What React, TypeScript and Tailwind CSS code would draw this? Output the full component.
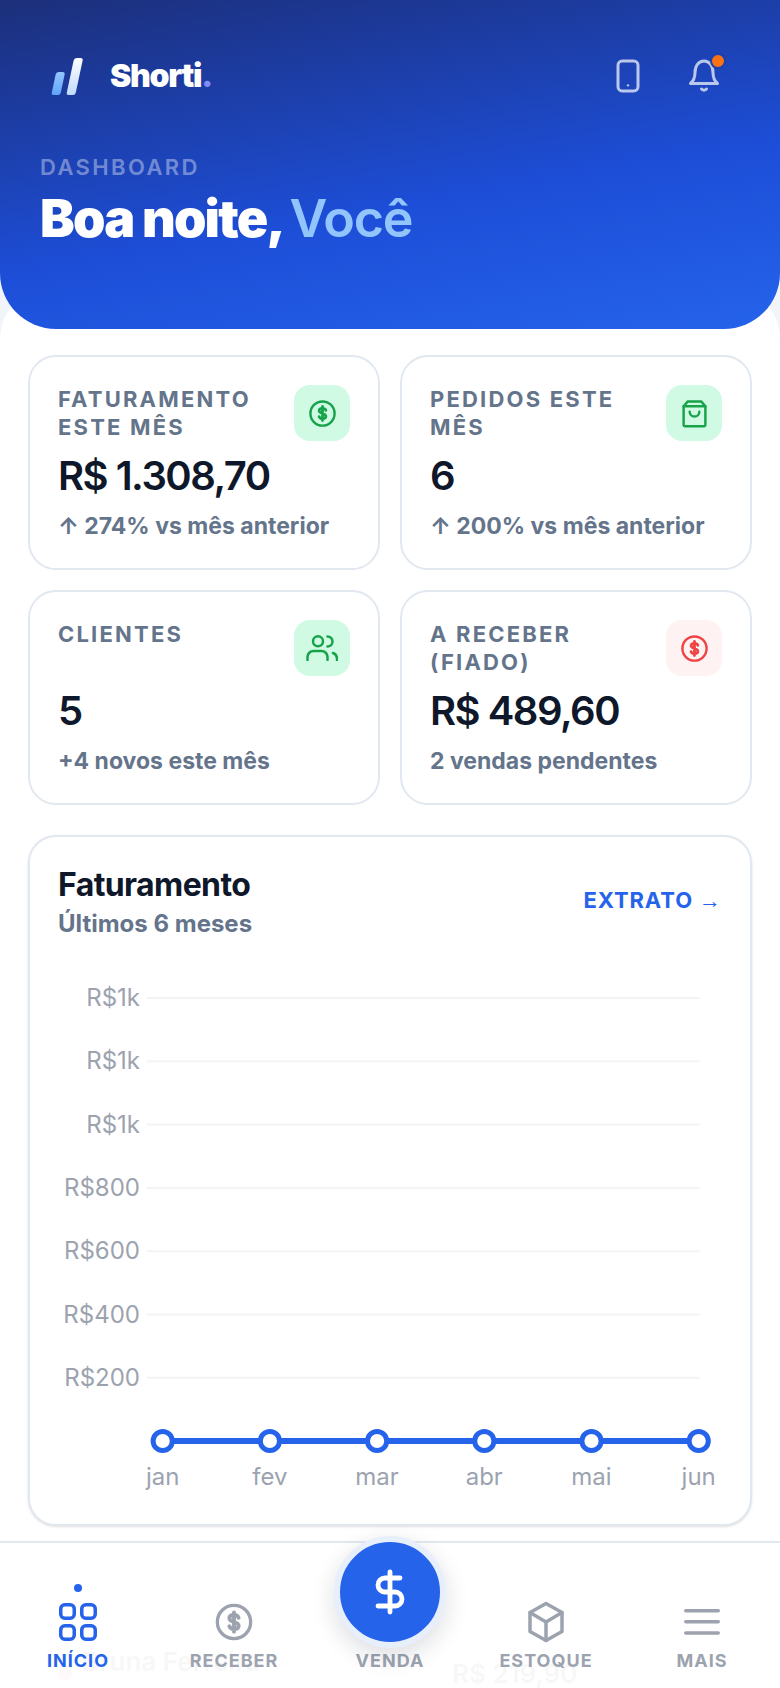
import { DollarSign } from "lucide-react";

type Stat = {
  label: string[];
  value: string;
  note: string;
  tone: "green" | "red";
  icon: "money" | "bag" | "users";
};

const stats: Stat[] = [
  { label: ["FATURAMENTO", "ESTE MÊS"], value: "R$ 1.308,70", note: "↑ 274% vs mês anterior", tone: "green", icon: "money" },
  { label: ["PEDIDOS ESTE", "MÊS"], value: "6", note: "↑ 200% vs mês anterior", tone: "green", icon: "bag" },
  { label: ["CLIENTES"], value: "5", note: "+4 novos este mês", tone: "green", icon: "users" },
  { label: ["A RECEBER", "(FIADO)"], value: "R$ 489,60", note: "2 vendas pendentes", tone: "red", icon: "money" },
];

const ticks = ["R$1k", "R$1k", "R$1k", "R$800", "R$600", "R$400", "R$200"];
const months = ["jan", "fev", "mar", "abr", "mai", "jun"];

function MoneyIcon({ size }: { size: number }) {
  return (
    <svg width={size} height={size} viewBox="0 0 24 24" fill="none" stroke="currentColor" strokeWidth="2" strokeLinecap="round" strokeLinejoin="round">
      <circle cx="12" cy="12" r="10" />
      <path d="M14.8 9.4c-.4-1-1.4-1.6-2.8-1.6-1.7 0-2.8.8-2.8 2 0 2.8 5.6 1.6 5.6 4.4 0 1.2-1.1 2-2.8 2-1.4 0-2.4-.6-2.8-1.6M12 6.2v11.6" strokeWidth="2.3" />
    </svg>
  );
}

function BagIcon() {
  return (
    <svg width="29" height="29" viewBox="0 0 24 24" fill="none" stroke="currentColor" strokeWidth="2" strokeLinecap="round" strokeLinejoin="round">
      <path d="M6.5 2h11L21 6v15.5a1 1 0 0 1-1 1H4a1 1 0 0 1-1-1V6Z" />
      <path d="M3 6h18" />
      <path d="M8 10.5a4 4 0 0 0 8 0" />
    </svg>
  );
}

function UsersIcon() {
  return (
    <svg width="32" height="26" viewBox="0 0 32 26" fill="none" stroke="currentColor" strokeWidth="2.5" strokeLinecap="round" strokeLinejoin="round">
      <circle cx="12" cy="6.3" r="5" />
      <path d="M1.5 25v-3a6 6 0 0 1 6-6h8a6 6 0 0 1 6 6v3" />
      <path d="M21.5 1.5a5 5 0 0 1 0 10" />
      <path d="M31 25v-2a6 6 0 0 0-4-5" />
    </svg>
  );
}

function StatCard({ stat }: { stat: Stat }) {
  const boxTone = stat.tone === "green" ? "bg-[#d1fae5] text-[#16a34a]" : "bg-[#fef2f2] text-[#ef4444]";
  return (
    <div className="h-[215px] rounded-[28px] border-2 border-[#e2e8f0] bg-white p-7">
      <div className="flex h-14 items-start justify-between">
        <div className="text-[22px] leading-7 font-bold tracking-[2.2px] text-[#64748b]">
          {stat.label.map((line) => (
            <div key={line}>{line}</div>
          ))}
        </div>
        <div className={`flex h-14 w-14 shrink-0 items-center justify-center rounded-2xl ${boxTone}`}>
          {stat.icon === "money" && <MoneyIcon size={29} />}
          {stat.icon === "bag" && <BagIcon />}
          {stat.icon === "users" && <UsersIcon />}
        </div>
      </div>
      <div className="mt-[11px] text-[40px] leading-[48px] font-semibold tracking-[-1.5px] text-[#0f172a]">{stat.value}</div>
      <div className="mt-[10px] text-[23px] leading-[32px] font-bold text-[#64748b]">{stat.note}</div>
    </div>
  );
}

function RevenueChart() {
  return (
    <svg width="664" height="521" viewBox="0 0 664 521" className="mt-9 block">
      {ticks.map((t, i) => {
        const y = 23 + i * 63.3;
        return (
          <g key={i}>
            <line x1="89" x2="642" y1={y} y2={y} stroke="#f3f4f6" strokeWidth="2" />
            <text x="82" y={y + 8} textAnchor="end" fontSize="24" fill="#9ca3af">{t}</text>
          </g>
        );
      })}
      <line x1="104.7" x2="640.7" y1="466" y2="466" stroke="#2563eb" strokeWidth="6" />
      {months.map((m, i) => {
        const x = 104.7 + i * 107.2;
        return (
          <g key={m}>
            <circle cx={x} cy="466" r="9.6" fill="#fff" stroke="#2563eb" strokeWidth="5" />
            <text x={x} y="510" textAnchor="middle" fontSize="24" fill="#9ca3af">{m}</text>
          </g>
        );
      })}
    </svg>
  );
}

function BottomNav() {
  const label = "mt-[5px] text-[18px] leading-6 font-bold tracking-[1px]";
  const gray = "flex flex-col items-center pt-[57px] text-[#9ca3af]";
  return (
    <nav className="absolute inset-x-0 bottom-0 h-[147px] border-t-2 border-[#e2e8f0] bg-white/[0.97]">
      <div className="grid grid-cols-5">
        <div className="flex flex-col items-center pt-[41px] text-[#2563eb]">
          <span className="h-2 w-2 rounded-full bg-[#2563eb]" />
          <svg className="mt-2" width="44" height="44" viewBox="0 0 44 44" fill="none" stroke="currentColor" strokeWidth="3.5">
            <rect x="4.75" y="4.75" width="13.5" height="13.5" rx="4" />
            <rect x="25.75" y="4.75" width="13.5" height="13.5" rx="4" />
            <rect x="4.75" y="25.75" width="13.5" height="13.5" rx="4" />
            <rect x="25.75" y="25.75" width="13.5" height="13.5" rx="4" />
          </svg>
          <span className={label}>INÍCIO</span>
        </div>
        <div className={gray}>
          <div className="flex h-11 w-11 items-center justify-center">
            <MoneyIcon size={40} />
          </div>
          <span className={label}>RECEBER</span>
        </div>
        <div className={gray}>
          <div className="h-11 w-11" />
          <span className={label}>VENDA</span>
        </div>
        <div className={gray}>
          <svg width="44" height="44" viewBox="0 0 44 44" fill="none" stroke="currentColor" strokeWidth="3.5" strokeLinejoin="round" strokeLinecap="round">
            <path d="M22 3.5 38 12.5V31.5L22 40.5 6 31.5V12.5Z" />
            <path d="M6 12.5 22 22 38 12.5M22 22V40.5" />
          </svg>
          <span className={label}>ESTOQUE</span>
        </div>
        <div className={gray}>
          <svg width="44" height="44" viewBox="0 0 44 44" fill="none" stroke="currentColor" strokeWidth="3.5" strokeLinecap="round">
            <path d="M5.75 10.7h32.5M5.75 21.7h32.5M5.75 33h32.5" />
          </svg>
          <span className={label}>MAIS</span>
        </div>
      </div>
      {/* floating sale button */}
      <button className="absolute -top-[7px] left-1/2 flex h-[112px] w-[112px] -translate-x-1/2 items-center justify-center rounded-full border-[6px] border-[#e8effc] bg-[#2563eb] text-white shadow-[0_8px_24px_rgba(15,23,42,0.14)]">
        <DollarSign size={48} strokeWidth={2.4} />
      </button>
    </nav>
  );
}

export default function App() {
  return (
    <div className="relative h-[1688px] overflow-hidden bg-[#f1f5f9] font-['Inter',sans-serif]">
      <header className="relative z-10 h-[329px] rounded-b-[56px] bg-[linear-gradient(170deg,#1c2f7a,#1d4ed8_60%,#2563eb)] px-10 pt-[52px]">
        <div className="flex h-12 items-center justify-between">
          <div className="flex items-center">
            <svg className="ml-[6px]" width="40" height="44" viewBox="0 0 40 44">
              <defs>
                <linearGradient id="barSmall" x1="0" y1="0" x2="0" y2="1">
                  <stop offset="0" stopColor="#93c5fd" />
                  <stop offset="1" stopColor="#60a5fa" />
                </linearGradient>
                <linearGradient id="barBig" x1="0" y1="0" x2="0" y2="1">
                  <stop offset="0" stopColor="#ffffff" />
                  <stop offset="1" stopColor="#bfdbfe" />
                </linearGradient>
              </defs>
              <rect x="14" y="18" width="9" height="23" rx="2.5" fill="url(#barSmall)" transform="skewX(-12)" />
              <rect x="29" y="4" width="9" height="37" rx="2.5" fill="url(#barBig)" transform="skewX(-12)" />
            </svg>
            <span className="ml-[24px] text-[32px] font-black tracking-[-1.3px] text-white">
              Shorti<span className="text-[#818cf8]">.</span>
            </span>
          </div>
          <div className="mr-4 flex items-center text-white/70">
            <svg width="40" height="40" viewBox="0 0 24 24" fill="none" stroke="currentColor" strokeWidth="1.8">
              <rect x="6" y="3" width="12" height="18" rx="2.5" />
              <circle cx="12" cy="17.6" r="0.7" fill="currentColor" stroke="none" />
            </svg>
            <div className="relative -mt-[2px] ml-[36px] h-10 w-10">
              <svg width="40" height="40" viewBox="0 0 40 40" fill="none" stroke="currentColor" strokeWidth="3" strokeLinejoin="round" strokeLinecap="round">
                <path d="M6.5 28.5c3-2.5 4.5-6 4.5-11 0-7 4-11.5 9-11.5s9 4.5 9 11.5c0 5 1.5 8.5 4.5 11Z" />
                <path d="M17.5 34c1 1.5 4 1.5 5 0" />
              </svg>
              <span className="absolute top-[-2px] left-[26px] h-4 w-4 rounded-full border-2 border-[#1e40af] bg-[#f97316]" />
            </div>
          </div>
        </div>
        <p className="mt-[53px] text-[22px] leading-7 font-semibold tracking-[2.4px] text-white/40">DASHBOARD</p>
        <h1 className="mt-[8px] text-[52px] leading-[60px] font-black tracking-[-1.8px] text-white">
          Boa noite, <span className="font-semibold tracking-[-1.2px] text-[#93c5fd]">Você</span>
        </h1>
      </header>

      <main className="relative -mt-[45px] rounded-t-[56px] bg-white px-7 pt-[71px]">
        <div className="grid grid-cols-2 gap-5">
          {stats.map((s) => (
            <StatCard key={s.label[0]} stat={s} />
          ))}
        </div>

        <section className="mt-[30px] rounded-[28px] border-2 border-[#e2e8f0] bg-white p-7 shadow-sm">
          <div className="flex items-start justify-between">
            <div>
              <h2 className="text-[32px] leading-10 font-bold tracking-[-0.6px] text-[#0f172a]">Faturamento</h2>
              <p className="mt-1 text-[24px] leading-[30px] font-bold text-[#64748b]">Últimos 6 meses</p>
            </div>
            <span className="mt-5 text-[22px] leading-[30px] font-bold tracking-[0.9px] text-[#2563eb]">
              EXTRATO <span className="font-normal font-['Liberation_Sans',sans-serif]">→</span>
            </span>
          </div>
          <RevenueChart />
        </section>

        {/* recent sales list, scrolled mostly under the nav */}
        <section className="mt-[120px] grid grid-cols-[370px_1fr] pl-[54px]">
          <div className="text-[26px] leading-8 font-semibold text-[#0f172a]">Bruna Ferreira</div>
          <div className="mt-[12px] text-[26px] leading-8 font-semibold text-[#0f172a]">R$ 219,90</div>
        </section>
        <span className="absolute top-[1383px] left-[58px] h-[14px] w-[14px] rounded-full bg-[#ef4444]" />
      </main>

      <BottomNav />
    </div>
  );
}
